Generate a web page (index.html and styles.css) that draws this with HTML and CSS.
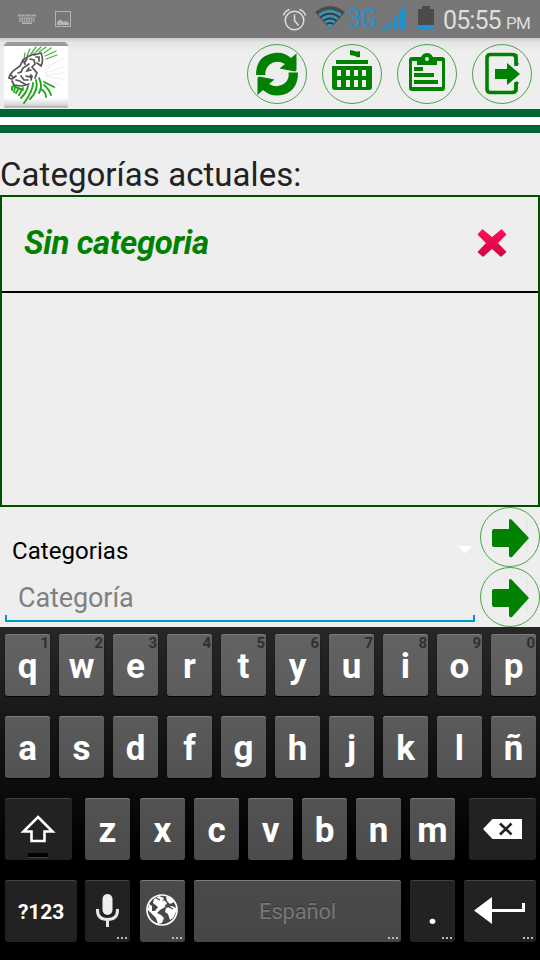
FILE: index.html
```html
<!DOCTYPE html>
<html lang="es">
<head>
<meta charset="utf-8">
<title>Categorías</title>
<link rel="stylesheet" href="styles.css">
</head>
<body>
<div class="status">
  <svg width="230" height="38" viewBox="0 0 230 38">
    <g stroke="#b4b4b4" fill="none"><path d="M18 15.500H36M19 18.500H35" stroke-width="2" stroke-dasharray="1.700 .6"/><path d="M19 21H35" stroke-width="1.500" stroke-dasharray="1.700 .6"/><path d="M22 23.200H32" stroke-width="1.600"/><rect x="55.500" y="11.500" width="15" height="15"/></g>
    <path d="M57 25V22L60 19.500L62 20.500L63.500 22L66 21L69 23V25Z" fill="#b4b4b4"/>
  </svg>
  <svg class="signals" width="160" height="38" viewBox="280 0 160 38">
    <g fill="none" stroke="#dedede" stroke-width="1.500"><circle cx="294.500" cy="20.500" r="9.300"/><path d="M294.500 14.500V20.500L298.500 25.500M283.500 15.500Q285 11 289.500 9.500M299.500 9.500Q304 11 305.500 15.500"/></g>
    <path d="M315 12Q330 0 345 12L341.500 16Q330 7 318.500 16Z" fill="#4b4b4b"/>
    <path d="M318 15Q330 5.500 342 15L330 29Z" fill="#333"/>
    <g fill="none" stroke="#3d8fb4" stroke-width="2.900"><path d="M319 15.500Q330 7 341 15.500M322 19Q330 13 338 19M325 22.500Q330 19 335 22.500"/></g><path d="M326.500 25Q330 22.500 333.500 25L330 29Z" fill="#3d8fb4"/>
    <text x="348" y="27.500" textLength="29" lengthAdjust="spacingAndGlyphs">3G</text>
    <path d="M381 29L387 24V29ZM389 22L392 19.500V29H389ZM394 17.500L397.500 14V29H394ZM400 11L405 6V29H400Z" fill="#2391cd"/>
    <path d="M418 9H422V6H430V9H434V25H418Z" fill="#4b4b4b"/><rect x="418" y="25" width="16" height="5" fill="#2391cd"/>
  </svg>
  <div class="clock"><span class="time">05:55</span><span class="pm">PM</span></div>
</div>
<header class="header">
  <svg class="logo" width="66" height="66" viewBox="0 0 66 66">
    <defs><linearGradient id="card" x2="0" y2="1"><stop offset=".85" stop-color="#fff"/><stop offset="1" stop-color="#ccc"/></linearGradient></defs>
    <path d="M1 3L4 0H62L65 3V5H1Z" fill="#999"/><rect x="1" y="4" width="64" height="61" rx="1" fill="url(#card)"/><path d="M1.500 65H64.500" stroke="#999"/>
    <g fill="none" stroke-linecap="round">
    <g stroke="#4db348" stroke-width="1.300"><path d="M21 17L22 11M24 14L27 7M28 12L33 5M32 11L38 5M36 10L43 5M41 11L48 6M42 14L53 9M43 17L54 13"/></g>
    <g stroke="#eee"><path d="M42 28L54 20M42 31L61 25M42 34L60 37M43 37L58 44M44 24L60 17M42 33L62 31"/></g>
    <g stroke="#24a520" stroke-width="1.900"><path d="M9 45L9 48M12 45L11 50M16 46L13 51M20 46L16 53M25 44Q24 50 18 56M30 41Q30 49 21 61M33 38Q36 48 27 57M36 36Q40 44 36 51M41 40L51 45M41 43Q46 47 48 53M38 47Q43 50 43 55M10 44L20 48"/></g>
    <g stroke="#555" stroke-width="1.700"><path d="M31 13L38 11Q41 18 38 24L34 21M33 15L36 15L36 19"/><path d="M31 12L26 14L20 18L17 24L10 29L7 33L6 36L9 37L13 34M8 33L10 35"/><path d="M20 18L22 22M24 17L22 20M27 17L31 18L32 22L29 25L34 31L32 36M26 22L20 26L18 30L15 31M26 26L24 29L28 28"/><path d="M9 39L11 43L19 44L26 42M13 38L17 39M18 34L21 38L25 38M23 34L27 35L28 33M18 40L22 42M28 38L29 34"/></g></g>
  </svg>
  <nav class="actions">
    <svg class="round" viewBox="0 0 60 60"><circle cx="30" cy="30" r="29.500"/><g fill="#008200"><path d="M9 31Q9 14 23 10Q35 6 44 14L49.500 9.500V26L48 27.500Q40 26 32.500 24.500L38 20Q29 15 22 21Q17.500 26 18.500 31Z"/><path d="M51 28.500Q51 46 37 50.500Q25 54 16 46L10.500 51V34L12 32.500Q20 34 27.500 35.500L22 40Q31 45 38 39Q42.500 35 41.500 28.500Z"/></g></svg>
    <svg class="round" viewBox="0 0 60 60"><circle cx="30" cy="30" r="29.500"/><path fill="#008200" fill-rule="evenodd" d="M28 6L33 7Q35 8 38 7V13Q35 14 33 12L28 11ZM14 16H46V20H14ZM10 22H50V43Q50 46 47 46H13Q10 46 10 43ZM15 26V32H19V26ZM24 26V32H28V26ZM32 26V32H36V26ZM40 26V32H44V26ZM15 36V43H19V36ZM24 36V43H28V36ZM32 36V43H36V36ZM40 36V43H44V36Z"/></svg>
    <svg class="round" viewBox="0 0 60 60"><circle cx="30" cy="30" r="29.500"/><path fill="#008200" fill-rule="evenodd" d="M15 13H24Q26 9 30 9Q34 9 36 13H45Q48 13 48 16V44Q48 47 45 47H15Q12 47 12 44V16Q12 13 15 13ZM15 17V43H45V17H40V21H20V17ZM30 13A2 2 0 1 0 30 17A2 2 0 1 0 30 13ZM17 23H26V27H17ZM17 29H37V33H17ZM17 36H41V40H17Z"/></svg>
    <svg class="round" viewBox="0 0 60 60"><circle cx="30" cy="30" r="29.500"/><path d="M44 22V14Q44 10.500 40 10.500H18.500Q15 10.500 15 14V45Q15 48.500 18.500 48.500H40Q44 48.500 44 45V38" fill="none" stroke="#008200" stroke-width="3.600"/><path d="M35 15.500L51 30L35 45Z" fill="#eee"/><path d="M44 10V18.500L45.800 21M44 48V40.500L45.800 38" fill="none" stroke="#008200" stroke-width="3"/><path d="M23 25H35V19L48 30L35 41V35H23Z" fill="#008200"/></svg>
  </nav>
</header>
<div class="stripes"></div>
<h1 class="title"><span class="title-text">Categorías actuales:</span></h1>
<section class="list">
  <div class="row"><span class="name">Sin categoria</span>
    <svg width="30" height="30" viewBox="0 0 30 30"><defs><linearGradient id="cross" x2="0" y2="1"><stop stop-color="#ff0d58"/><stop offset="1" stop-color="#d00543"/></linearGradient></defs><path d="M5.500 2L15 10L24.500 2L28.500 6.500L20 15L28.500 24L24 28L15 20L6 28L1.500 24L10 15L1.500 6.500Z" fill="url(#cross)" stroke="url(#cross)" stroke-width="1.500" stroke-linejoin="round"/></svg>
  </div>
</section>
<section class="form">
  <div class="fields">
    <div class="spinner"><span class="spinner-text">Categorias</span><svg width="14" height="8" viewBox="0 0 14 8"><path d="M0 0H14L7 7.500Z" fill="#fff"/></svg></div>
    <div class="edit"><span class="edit-text">Categoría</span></div>
  </div>
  <div class="submit">
    <svg class="round" viewBox="0 0 60 60"><circle cx="30" cy="30" r="29.500"/><path d="M47 12V45" stroke="#dce4dc"/><path d="M14 22H29V13Q30 11 32 13L49 31L32 50Q30 51 29 49V40H14Q12 40 12 38V24Q12 22 14 22Z" fill="#008200"/></svg>
    <svg class="round" viewBox="0 0 60 60"><circle cx="30" cy="30" r="29.500"/><path d="M47 12V45" stroke="#dce4dc"/><path d="M14 22H29V13Q30 11 32 13L49 31L32 50Q30 51 29 49V40H14Q12 40 12 38V24Q12 22 14 22Z" fill="#008200"/></svg>
  </div>
</section>
<section class="keyboard">
  <div class="keys first"><div class="key"><i>1</i>q</div><div class="key"><i>2</i>w</div><div class="key"><i>3</i>e</div><div class="key"><i>4</i>r</div><div class="key"><i>5</i>t</div><div class="key"><i>6</i>y</div><div class="key"><i>7</i>u</div><div class="key"><i>8</i>i</div><div class="key"><i>9</i>o</div><div class="key"><i>0</i>p</div></div>
  <div class="keys second"><div class="key">a</div><div class="key">s</div><div class="key">d</div><div class="key">f</div><div class="key">g</div><div class="key">h</div><div class="key">j</div><div class="key">k</div><div class="key">l</div><div class="key">ñ</div></div>
  <div class="keys third">
    <div class="key dark"><svg width="67" height="62" viewBox="0 0 67 62"><path d="M33 19L47.500 33.500H39.500V43H26.500V33.500H18.500Z" fill="none" stroke="#fff" stroke-width="2.600"/><rect x="23" y="55" width="20" height="4" fill="#000"/><path d="M23 59.500H43" stroke="#444"/></svg></div>
    <div class="key">z</div><div class="key">x</div><div class="key">c</div><div class="key">v</div><div class="key">b</div><div class="key">n</div><div class="key">m</div>
    <div class="key dark"><svg width="67" height="62" viewBox="0 0 67 62"><path d="M14 31L23.500 21H53V41H23.500Z" fill="#fff"/><path d="M31 25.500L42.500 36.500M42.500 25.500L31 36.500" stroke="#222" stroke-width="2.600"/></svg></div>
  </div>
  <div class="keys fourth">
    <div class="key dark symbols"><span>?123</span></div>
    <div class="key dark"><svg width="45" height="62" viewBox="0 0 45 62"><rect x="17.500" y="14" width="10" height="21" rx="5" fill="#eee"/><path d="M12.500 29V30Q12.500 39.500 22.500 39.500T32.500 30V29M22.500 39V47" fill="none" stroke="#e6e6e6" stroke-width="3"/></svg><b class="more"></b></div>
    <div class="key"><svg width="45" height="62" viewBox="0 0 45 62"><circle cx="22" cy="30" r="15" fill="#484848" stroke="#fff" stroke-width="1.700"/><path d="M14 19L19 16L24 18L22 22L24 20L27 23L25 27L20 30L17 33L21 35L24 38L22 43L18 44L16 38L11 33L8 30L9 24L12 26L12 31L15 31L18 27L13 23ZM26 16Q32 18 34 22L30 24L27 21ZM26 28L32 26L36 28V32L33 38L30 40L28 34L25 32Z" fill="#fff" fill-rule="evenodd"/><path d="M25 25L33 29M16 18L20 20" stroke="#484848" stroke-width="1.200"/></svg><b class="more"></b></div>
    <div class="key space"><span>Español</span><b class="more"></b></div>
    <div class="key dark"><svg width="45" height="62" viewBox="0 0 45 62"><text x="17.500" y="44" class="period">.</text></svg><b class="more"></b></div>
    <div class="key dark"><svg width="72" height="62" viewBox="0 0 72 62"><path d="M10 30.500L28 17V44Z" fill="#fff"/><path d="M28 30.500H59.500V23" fill="none" stroke="#fff" stroke-width="3"/></svg><b class="more"></b></div>
  </div>
</section>
</body>
</html>
```
FILE: styles.css
```css
* { box-sizing: border-box; }
body { margin: 0; width: 540px; height: 960px; overflow: hidden; background: #eee; font-family: Roboto, sans-serif; color: #222; }
svg { display: block; flex: none; }
.status { display: flex; height: 38px; background: #777; color: #dedede; }
.signals { margin-left: 50px; }
.signals text { font-size: 28px; fill: #2391cd; }
.clock { display: flex; align-items: baseline; padding-left: 3px; line-height: 41px; white-space: nowrap; }
.time { font-size: 25px; width: 63px; letter-spacing: -.9px; }
.pm { font-size: 17px; letter-spacing: -.8px; }
.header { display: flex; justify-content: space-between; height: 71px; padding: 4px 8px 0 3px; background: linear-gradient(#c9c9c9, #e4e4e4 4px, #eee 14px); }
.actions { display: flex; gap: 15px; padding-top: 2px; }
.round { width: 60px; height: 60px; }
.round circle { fill: none; stroke: #48a548; stroke-width: 1; }
.stripes { height: 24px; background: #fff; border: solid #006633; border-width: 8px 0; }
.title { height: 62px; margin: 0; padding-top: 22px; font-size: 33px; line-height: 39px; font-weight: 400; letter-spacing: .05px; white-space: nowrap; }
.list { height: 312px; border: 2px solid #005000; }
.row { display: flex; align-items: center; justify-content: space-between; height: 96px; padding: 0 31px 2px 22px; border-bottom: 2px solid #000; }
.name { padding-bottom: 2px; color: #008200; font-size: 33px; font-weight: 700; font-style: italic; letter-spacing: -.4px; }
.form { display: flex; height: 120px; }
.fields { width: 480px; }
.spinner { display: flex; height: 68px; align-items: center; justify-content: space-between; padding: 18px 8px 0 12px; font-size: 24px; color: #000; }
.spinner-text { padding-top: 2px; letter-spacing: .05px; }
.edit { height: 47px; margin: 0 5px; padding-left: 13px; font-size: 27px; line-height: 46px; letter-spacing: -.1px; color: #808080; background: linear-gradient(#0099cc, #0099cc) bottom / 100% 2px no-repeat, linear-gradient(#0099cc, #0099cc) left bottom / 2px 7px no-repeat, linear-gradient(#0099cc, #0099cc) right bottom / 2px 7px no-repeat; }
.keyboard { height: 333px; padding: 7px 4px 0 5px; background: linear-gradient(#272727, #000 230px); display: flex; flex-direction: column; gap: 20px; }
.keys { display: flex; gap: 9px; height: 62px; }
.third .key:nth-child(1) { width: 67px; margin-right: 4px; }
.third .key:nth-child(2) { margin-right: 1px; }
.third .key:nth-child(9) { width: 67px; margin-left: 5px; }
.fourth .key:nth-child(1), .fourth .key:nth-child(6) { width: 72px; }
.fourth .key:nth-child(1) { margin-right: -1px; }
.fourth .key:nth-child(2) { margin-right: 1px; }
.fourth .key.space { width: 207px; }
.key { position: relative; width: 45px; height: 62px; flex: none; display: flex; align-items: center; justify-content: center; border-radius: 3px; box-shadow: inset 0 1px #7c7c7c, 0 1px 1px #000; color: #fff; font-size: 35px; font-weight: 700; line-height: 62px; padding-top: 4px; }
.first .key { background: linear-gradient(#636363, #5c5c5c); }
.second .key { background: linear-gradient(#5b5b5b, #525252); }
.third .key { background: linear-gradient(#535353, #4b4b4b); }
.fourth .key { background: linear-gradient(#4a4a4a, #464646); }
.keys .key.dark { background: #222; box-shadow: inset 0 1px #424242; }
.key:has(svg) { padding: 0; }
.key i { position: absolute; top: 1px; right: 1px; font-size: 15px; line-height: 17px; font-style: normal; color: #303030; }
.more { position: absolute; right: 3px; bottom: 3px; width: 10px; height: 2px; background: repeating-linear-gradient(90deg, #bbb 0 2px, transparent 2px 4px); }
.keys .symbols { padding-top: 2px; font-size: 21px; letter-spacing: -.1px; }
.keys .space { padding-top: 1px; font-size: 22px; font-weight: 400; letter-spacing: -.2px; color: #777; text-shadow: 0 -1px #333; }
.period { font-size: 35px; fill: #fff; }
```
